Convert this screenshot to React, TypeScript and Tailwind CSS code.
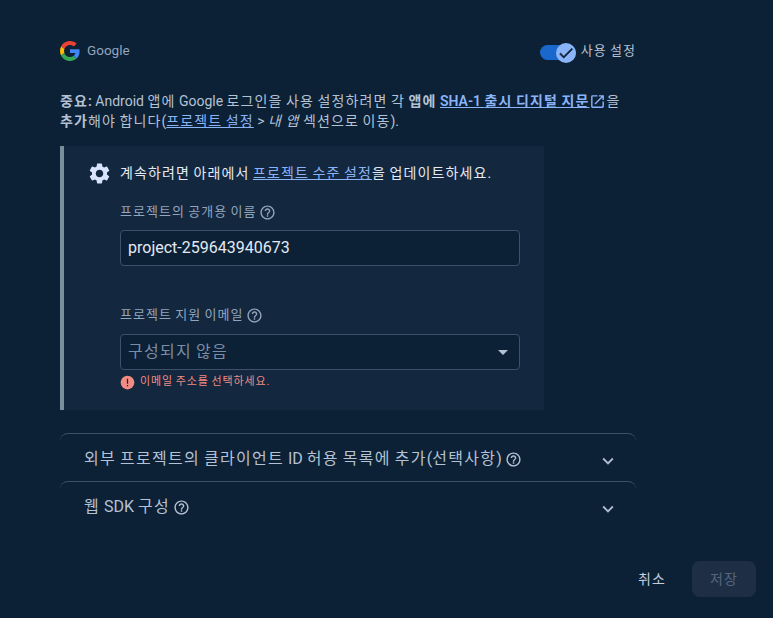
import React from "react";

const font = { fontFamily: '"Roboto","Noto Sans CJK KR",sans-serif' };

function K({ children }: { children: React.ReactNode }) {
  return <span className="tracking-[0.08em] [word-spacing:-0.08em]">{children}</span>;
}

function Help({ size = 17, className = "" }: { size?: number; className?: string }) {
  return (
    <svg width={size} height={size} viewBox="0 0 24 24" fill="currentColor" className={className}>
      <path d="M11 18h2v-2h-2v2zm1-16C6.48 2 2 6.48 2 12s4.48 10 10 10 10-4.48 10-10S17.52 2 12 2zm0 18c-4.41 0-8-3.59-8-8s3.59-8 8-8 8 3.59 8 8-3.59 8-8 8zm0-14c-2.21 0-4 1.79-4 4h2c0-1.1.9-2 2-2s2 .9 2 2c0 2-3 1.75-3 5h2c0-2.25 3-2.5 3-5 0-2.21-1.79-4-4-4z" />
    </svg>
  );
}

function Chevron() {
  return (
    <svg width="22" height="22" viewBox="0 0 24 24" fill="#aebccd">
      <path d="M7.41 8.59 12 13.17l4.59-4.58L18 10l-6 6-6-6z" />
    </svg>
  );
}

function Accordion({ children }: { children: React.ReactNode }) {
  return (
    <div className="h-12 flex items-center justify-between rounded-t-lg border-t border-[#3d4f66] pl-[24px] pr-[17px] text-base text-[#b4c2d3]">
      <div className="flex items-center gap-[3px] pt-[3px]">{children}</div>
      <div className="pt-[7px]"><Chevron /></div>
    </div>
  );
}

export default function App() {
  return (
    <div style={font} className="w-[773px] h-[618px] overflow-hidden bg-[#0c2036] text-[#b4c2d3] pl-[60px] pt-10">
      <div className="w-[576px]">
        <div className="h-6 flex items-center justify-between">
          <div className="flex items-center gap-[7px] pb-[3px]">
            <svg width="20" height="20" viewBox="0 0 48 48">
              <path fill="#EA4335" d="M24 9.5c3.54 0 6.71 1.22 9.21 3.6l6.85-6.85C35.9 2.38 30.47 0 24 0 14.62 0 6.51 5.38 2.56 13.22l7.98 6.19C12.43 13.72 17.74 9.5 24 9.5z" />
              <path fill="#4285F4" d="M46.98 24.55c0-1.57-.15-3.09-.38-4.55H24v9.02h12.94c-.58 2.96-2.26 5.48-4.78 7.18l7.73 6c4.51-4.18 7.09-10.36 7.09-17.65z" />
              <path fill="#FBBC05" d="M10.53 28.59c-.48-1.45-.76-2.99-.76-4.59s.27-3.14.76-4.59l-7.98-6.19C.92 16.46 0 20.12 0 24c0 3.88.92 7.54 2.56 10.78l7.97-6.19z" />
              <path fill="#34A853" d="M24 48c6.48 0 11.93-2.13 15.89-5.81l-7.73-6c-2.15 1.45-4.92 2.3-8.16 2.3-6.26 0-11.57-4.22-13.47-9.91l-7.98 6.19C6.51 42.62 14.62 48 24 48z" />
            </svg>
            <span className="text-[13.5px] text-[#93a5bc]">Google</span>
          </div>
          <div className="flex items-center gap-[5px]">
            <div className="relative w-9 h-[15px] self-start mt-1 rounded-full bg-[#1a68cc]">
              <div className="absolute right-0 -top-[2px] w-5 h-5 rounded-full bg-[#8ab4f8] flex items-center justify-center">
                <svg width="18" height="18" viewBox="0 0 24 24" fill="#0c2036" stroke="#0c2036" strokeWidth="0.6">
                  <path d="M9 16.17 4.83 12l-1.42 1.41L9 19 21 7l-1.41-1.41z" />
                </svg>
              </div>
            </div>
            <span className="text-[13px] text-[#b4c2d3] pb-[3px]"><K>사용 설정</K></span>
          </div>
        </div>

        <p className="mt-[27px] text-sm leading-5 text-[#b4c2d3] whitespace-nowrap">
          <b className="font-semibold"><K>중요</K>:</b> Android <K>앱에</K> Google <K>로그인을 사용 설정하려면 각</K>{" "}
          <b className="font-semibold"><K>앱에</K></b>{" "}
          <a className="font-semibold text-[#8ab4f8] underline">SHA-1 <K>출시 디지털 지문</K></a>
          <svg width="17" height="17" viewBox="0 0 24 24" fill="#8ab4f8" className="inline align-[-4px]">
            <path d="M19 19H5V5h7V3H5a2 2 0 0 0-2 2v14a2 2 0 0 0 2 2h14c1.1 0 2-.9 2-2v-7h-2v7zM14 3v2h3.59l-9.83 9.83 1.41 1.41L19 6.41V10h2V3h-7z" />
          </svg>
          <K>을</K>
          <br />
          <b className="font-semibold"><K>추가</K></b><K>해야 합니다</K>(<a className="text-[#8ab4f8] underline"><K>프로젝트 설정</K></a> &gt; <i><K>내 앱</K></i> <K>섹션으로 이동</K>).
        </p>

        <div className="mt-[15px] w-[484px] h-[264px] bg-[#13273f] border-l-4 border-[#78909c] pl-[25px] pt-[16px]">
          <div className="flex items-center gap-[10px] h-[22px] -ml-[2px]">
            <svg width="25" height="25" viewBox="0 0 24 24" fill="#d7e4fb" className="-mr-[2px] shrink-0">
              <path d="M19.14 12.94c.04-.3.06-.61.06-.94 0-.32-.02-.64-.07-.94l2.03-1.58a.49.49 0 0 0 .12-.61l-1.92-3.32a.488.488 0 0 0-.59-.22l-2.39.96c-.5-.38-1.03-.7-1.62-.94l-.36-2.54a.484.484 0 0 0-.48-.41h-3.84c-.24 0-.43.17-.47.41l-.36 2.54c-.59.24-1.13.57-1.62.94l-2.39-.96c-.22-.08-.47 0-.59.22L2.74 8.87c-.12.21-.08.47.12.61l2.03 1.58c-.05.3-.09.63-.09.94s.02.64.07.94l-2.03 1.58a.49.49 0 0 0-.12.61l1.92 3.32c.12.22.37.29.59.22l2.39-.96c.5.38 1.03.7 1.62.94l.36 2.54c.05.24.24.41.48.41h3.84c.24 0 .44-.17.47-.41l.36-2.54c.59-.24 1.13-.56 1.62-.94l2.39.96c.22.08.47 0 .59-.22l1.92-3.32c.12-.22.07-.47-.12-.61l-2.01-1.58zM12 15.6c-1.98 0-3.6-1.62-3.6-3.6s1.62-3.6 3.6-3.6 3.6 1.62 3.6 3.6-1.62 3.6-3.6 3.6z" />
            </svg>
            <span className="text-sm text-[#e3eaf5] whitespace-nowrap">
              <K>계속하려면 아래에서</K> <a className="text-[#8ab4f8] underline"><K>프로젝트 수준 설정</K></a><K>을 업데이트하세요</K>.
            </span>
          </div>

          <div className="ml-[31px] w-[400px]">
            <div className="mt-[20px] h-[16px] flex items-center gap-[3px] text-[13px] text-[#93a5bc]">
              <K>프로젝트의 공개용 이름</K> <Help />
            </div>
            <div className="mt-[10px] h-9 rounded border border-[#3f5168] bg-[#0c2036] px-[7px] flex items-center text-base text-[#e3eaf5]">
              project-259643940673
            </div>

            <div className="mt-[41px] h-[16px] flex items-center gap-[3px] text-[13px] text-[#93a5bc]">
              <K>프로젝트 지원 이메일</K> <Help />
            </div>
            <div className="mt-[11px] h-9 rounded border border-[#3f5168] bg-[#0c2036] pl-[7px] pr-[11px] flex items-center justify-between text-base text-[#7c8ea5]">
              <K>구성되지 않음</K>
              <svg width="10" height="5" viewBox="0 0 10 5" fill="#b4c2d3"><path d="M0 0h10L5 5z" /></svg>
            </div>
            <div className="mt-[5px] h-[14px] flex items-center gap-[5px] text-[11px] text-[#f28b82]">
              <svg width="15" height="15" viewBox="0 0 24 24">
                <circle cx="12" cy="12" r="11" fill="#f28b82" />
                <path d="M11 6h2v8h-2zM11 16h2v2h-2z" fill="#13273f" />
              </svg>
              <span><K>이메일 주소를 선택하세요</K>.</span>
            </div>
          </div>
        </div>

        <div className="mt-[23px]">
          <Accordion>
            <span><K>외부 프로젝트의 클라이언트</K> ID <K>허용 목록에 추가</K>(<K>선택사항</K>)</span> <Help />
          </Accordion>
          <Accordion>
            <span><K>웹</K> SDK <K>구성</K></span> <Help />
          </Accordion>
        </div>
      </div>

      <div className="mt-[32px] w-[696px] flex items-center justify-end gap-[26px]">
        <span className="text-sm text-[#c3cedd]"><K>취소</K></span>
        <div className="w-16 h-9 rounded-lg bg-[#1e2f45] flex items-center justify-center text-sm text-[#54667e]"><K>저장</K></div>
      </div>
    </div>
  );
}
